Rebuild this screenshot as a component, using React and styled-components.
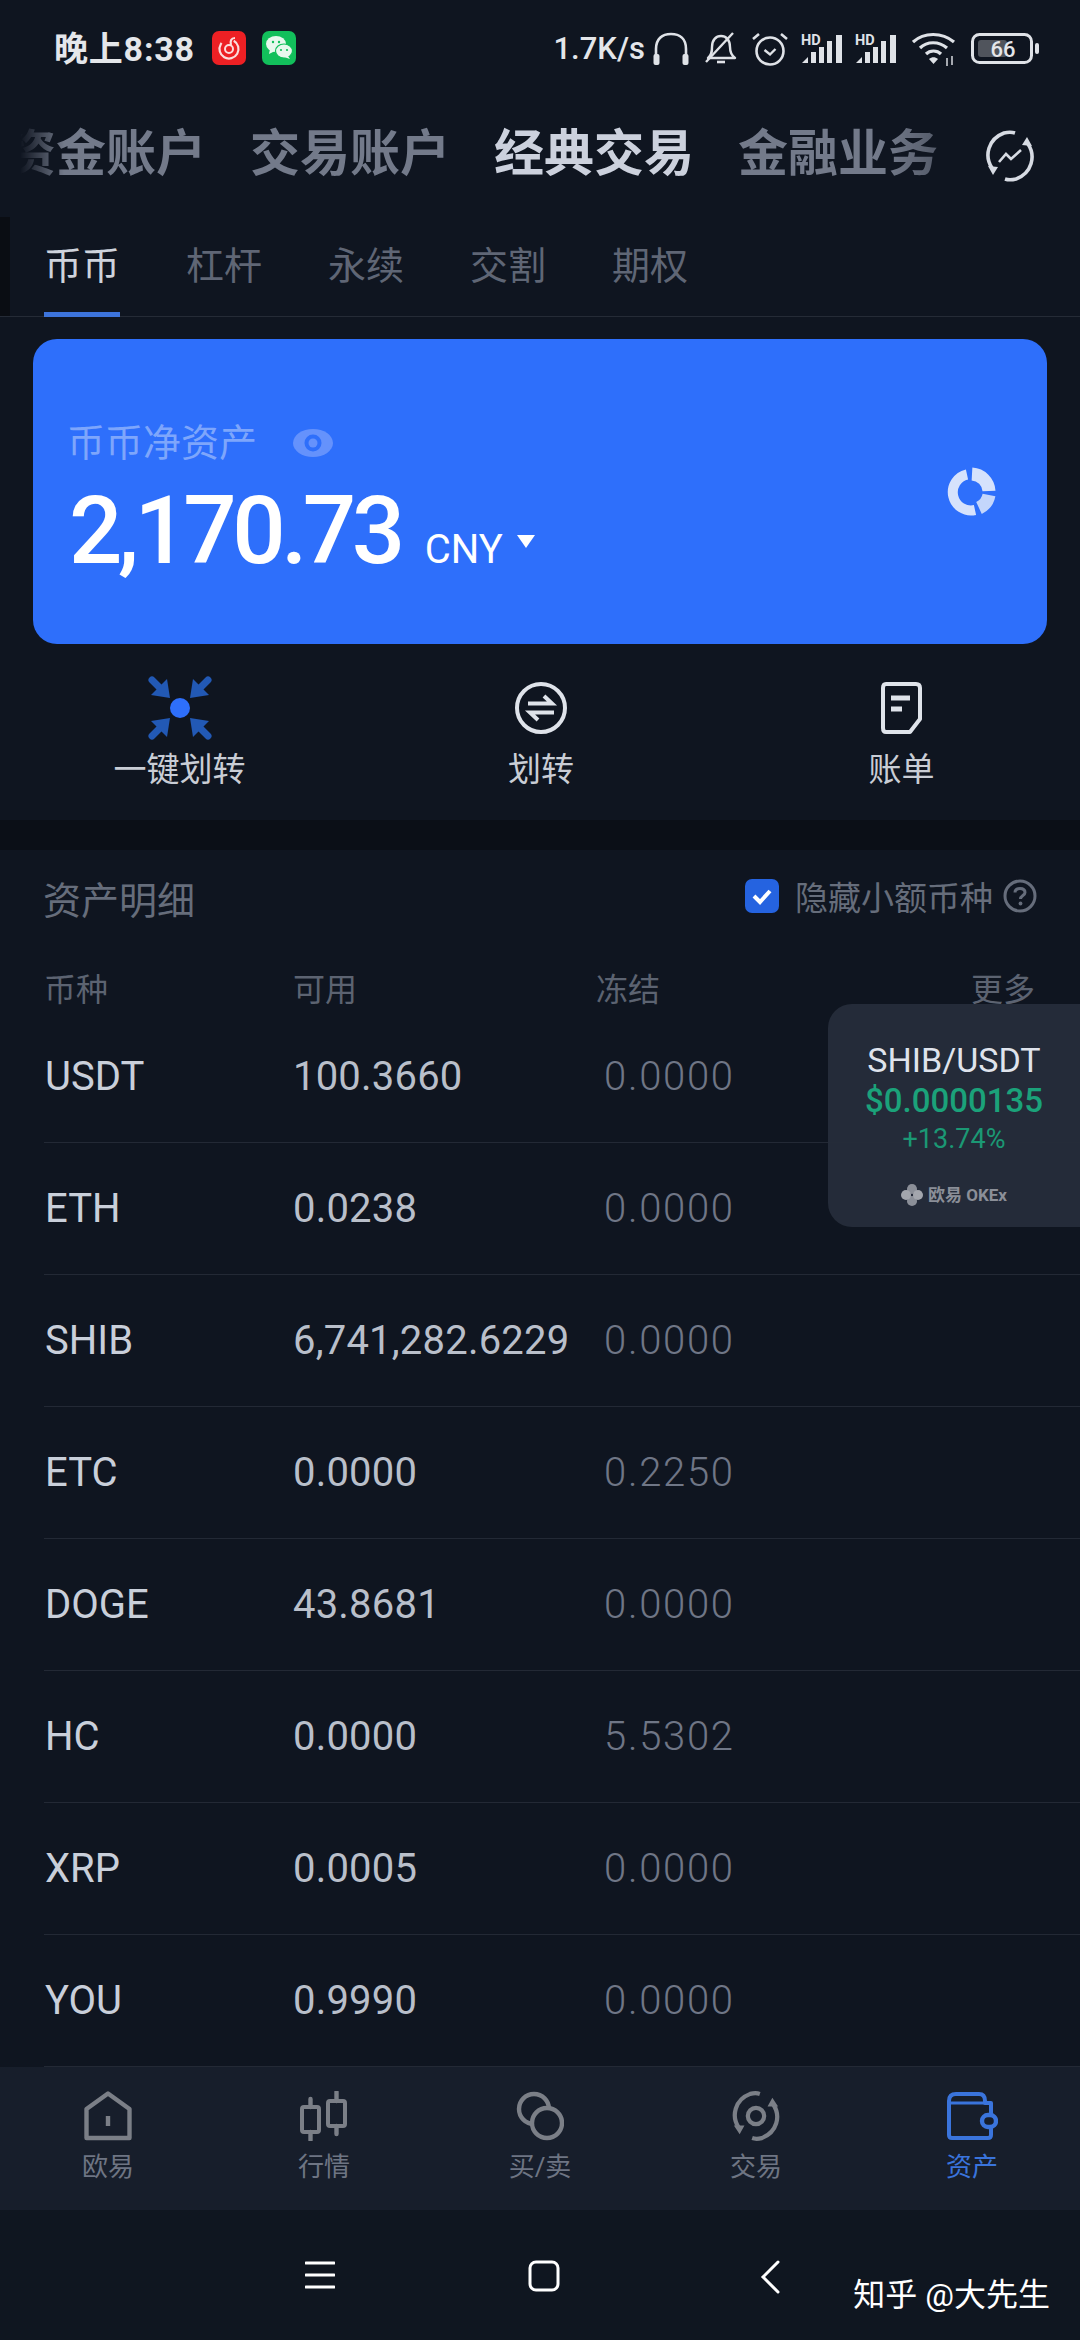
import React from "react";
import styled, { createGlobalStyle } from "styled-components";

const SANS = `Roboto, "Noto Sans CJK SC", sans-serif`;

const Global = createGlobalStyle`
	html, body {
		margin: 0;
		padding: 0;
		background: #0f1520;
	}
	* {
		box-sizing: border-box;
	}
`;

// Layout containers
const Screen = styled.div`
	width: 1080px;
	height: 2340px;
	overflow: hidden;
	position: relative;
	display: flex;
	flex-direction: column;
	background: #0f1520;
	font-family: ${SANS};
`;

const StatusBar = styled.div`
	height: 96px;
	padding: 30px 40px 0 54px;
	display: flex;
	align-items: flex-start;
	color: #e4e6ea;
`;

const Clock = styled.span`
	font-size: 34px;
	font-weight: 700;
	line-height: 38px;
	letter-spacing: 0.8px;
	width: 158px;
`;

const AppBadge = styled.svg`
	width: 34px;
	height: 36px;
	margin-right: 16px;
`;

const StatusRight = styled.div`
	margin-left: auto;
	display: flex;
	align-items: center;
	height: 38px;
`;

const Speed = styled.span`
	font-size: 31px;
	font-weight: 500;
	line-height: 38px;
	margin-right: 8px;
`;

const StatusIcon = styled.svg`
	display: block;
	margin-right: ${(p) => p.$gap || 0}px;
`;

const TopTabs = styled.div`
	height: 108px;
	display: flex;
	align-items: center;
	padding: 8px 0 0 6px;
`;

const TopTabScroll = styled.div`
	display: flex;
	gap: 44px;
	width: 950px;
	overflow: hidden;
	-webkit-mask-image: linear-gradient(to right, transparent 14px, #000 58px, #000 880px, rgba(0, 0, 0, 0.7) 930px);
	mask-image: linear-gradient(to right, transparent 14px, #000 58px, #000 880px, rgba(0, 0, 0, 0.7) 930px);
`;

const TopTab = styled.span`
	font-size: 50px;
	line-height: 70px;
	font-weight: 700;
	flex: none;
	color: ${(p) => (p.$active ? "#ccd1dd" : "#737a8a")};
`;

const RefreshIcon = styled.svg`
	flex: none;
	margin: 4px 0 0 29px;
`;

const SubTabs = styled.div`
	height: 113px;
	padding: 13px 0 0 44px;
	display: flex;
	gap: 66px;
	border-bottom: 1px solid #252b36;
	position: relative;
	&:before {
		content: "";
		position: absolute;
		left: 0;
		top: 13px;
		width: 10px;
		height: 99px;
		background: #0a0d13;
	}
`;

const SubTab = styled.span`
	font-size: 38px;
	line-height: 98px;
	height: 100px;
	color: ${(p) => (p.$active ? "#ced3dc" : "#5f6675")};
	border-bottom: 5px solid ${(p) => (p.$active ? "#3d74dc" : "transparent")};
`;

const BalanceCard = styled.div`
	margin: 22px 33px 0;
	height: 305px;
	border-radius: 24px;
	background: #2e6ffb;
	padding: 0 51px 0 34px;
	display: flex;
	justify-content: space-between;
	align-items: center;
`;

const BalanceText = styled.div`
	display: flex;
	flex-direction: column;
	margin-top: 20px;
`;

const BalanceLabel = styled.div`
	display: flex;
	align-items: center;
	gap: 36px;
	font-size: 38px;
	line-height: 50px;
	color: #7ea6fb;
`;

const BalanceValue = styled.div`
	display: flex;
	align-items: baseline;
	color: #fff;
	margin-top: 9px;
	padding-left: 2px;
`;

const Amount = styled.span`
	font-size: 94px;
	line-height: 108px;
	font-weight: 500;
	letter-spacing: -4.5px;
`;

const Currency = styled.span`
	font-size: 40px;
	margin-left: 24px;
	margin-right: 14px;
	font-weight: 400;
`;

const Caret = styled.i`
	display: block;
	width: 0;
	height: 0;
	border-style: solid;
	border-width: 13px 9px 0 9px;
	border-color: #fff transparent transparent;
	align-self: center;
	margin-top: 20px;
`;

const Actions = styled.div`
	height: 176px;
	display: grid;
	grid-template-columns: 359px 364px 357px;
	padding-top: 32px;
`;

const Action = styled.div`
	display: flex;
	flex-direction: column;
	align-items: center;
	color: #c9cdd5;
	font-size: 33px;
	line-height: 44px;
	gap: 8px;
`;

const ActionIcon = styled.svg`
	display: block;
	margin: ${(p) => p.$inset || 0}px 0;
`;

const Band = styled.div`
	height: 30px;
	background: #0b0f17;
`;

const Section = styled.div`
	position: relative;
	height: 1217px;
	background: #0f1520;
`;

const SectionHead = styled.div`
	height: 100px;
	padding: 0 43px 6px 43px;
	display: flex;
	align-items: center;
	font-size: 38px;
	color: #666d7b;
`;

const HideOption = styled.div`
	margin-left: auto;
	display: flex;
	align-items: center;
	font-size: 33px;
	color: #666d7b;
	margin-bottom: 3px;
`;

const CheckMark = styled.svg`
	margin-right: 16px;
`;

const HelpMark = styled.svg`
	margin-left: 10px;
`;

const TableHead = styled.div`
	display: grid;
	grid-template-columns: 249px 303px 1fr auto;
	height: 61px;
	padding: 13px 45px 0 44px;
	align-items: center;
	font-size: 32px;
	color: #5c6371;
`;

const Row = styled.div`
	display: grid;
	grid-template-columns: 248px 311px 1fr;
	align-items: center;
	height: 132px;
	margin-left: 44px;
	padding-left: 1px;
	border-bottom: 1px solid #232935;
`;

const Coin = styled.span`
	font-size: 40px;
	font-weight: 400;
	color: #c9cfda;
`;

const Available = styled.span`
	font-size: 40px;
	font-weight: 400;
	letter-spacing: 0.2px;
	color: #b9bfca;
`;

const Frozen = styled.span`
	font-size: 40px;
	font-weight: 300;
	letter-spacing: 1.7px;
	color: #6f7686;
`;

const TickerCard = styled.div`
	position: absolute;
	right: 0;
	top: 154px;
	width: 252px;
	height: 223px;
	border-radius: 24px 0 0 24px;
	background: rgba(37, 44, 58, 0.97);
	display: flex;
	flex-direction: column;
	align-items: center;
	padding-top: 36px;
`;

const TickerPair = styled.div`
	font-size: 34px;
	line-height: 40px;
	color: #dfe3ec;
`;

const TickerPrice = styled.div`
	font-size: 33px;
	line-height: 41px;
	font-weight: 500;
	color: #1ba27a;
`;

const TickerChange = styled.div`
	font-size: 27px;
	line-height: 37px;
	color: #1b9874;
`;

const TickerBrand = styled.div`
	display: flex;
	align-items: center;
	gap: 5px;
	margin-top: 23px;
	font-size: 17px;
	line-height: 28px;
	font-weight: 700;
	color: #8b8f98;
`;

const BrandMark = styled.svg`
	display: block;
`;

const BottomNav = styled.div`
	height: 143px;
	background: #171e2b;
	display: grid;
	grid-template-columns: repeat(5, 216px);
`;

const NavItem = styled.div`
	display: flex;
	flex-direction: column;
	align-items: center;
	padding-top: 24px;
	font-size: 26px;
	line-height: 36px;
	gap: 8px;
	color: ${(p) => (p.$active ? "#3a74dc" : "#6e7583")};
`;

const SystemBar = styled.div`
	height: 130px;
	background: #0f1620;
	display: flex;
	align-items: flex-start;
	padding: 50px 0 0 305px;
	gap: 193px;
`;

const BackIcon = styled.svg`
	margin-left: 7px;
`;

const Watermark = styled.div`
	position: absolute;
	right: 30px;
	bottom: 25px;
	font-size: 32px;
	line-height: 40px;
	color: #fff;
`;

// Drawn icons
const NeteaseIcon = () => (
	<AppBadge viewBox="0 0 34 36">
		<rect x="0" y="1" width="34" height="34" rx="7" fill="#ed2024" />
		<circle cx="17" cy="19" r="9.5" fill="none" stroke="#fbdcdc" strokeWidth="2.2" strokeDasharray="46 14" transform="rotate(-60 17 19)" />
		<circle cx="17" cy="19" r="4" fill="none" stroke="#fbdcdc" strokeWidth="2" />
		<path d="M19 15 C18 11 19 8 23 8" fill="none" stroke="#fbdcdc" strokeWidth="2.2" />
	</AppBadge>
);

const WechatIcon = () => (
	<AppBadge viewBox="0 0 34 36">
		<rect x="0" y="1" width="34" height="34" rx="7" fill="#12bf5b" />
		<ellipse cx="14" cy="14" rx="10" ry="8" fill="#e8f8ee" />
		<path d="M8 19 L7 24 L13 21 Z" fill="#e8f8ee" />
		<ellipse cx="22" cy="21" rx="8.5" ry="7" fill="#e8f8ee" stroke="#12bf5b" strokeWidth="1.2" />
		<path d="M26 26 L28 29 L22 27 Z" fill="#e8f8ee" />
		<circle cx="11" cy="12" r="1.2" fill="#12bf5b" />
		<circle cx="17" cy="12" r="1.2" fill="#12bf5b" />
		<circle cx="19" cy="20" r="1.1" fill="#12bf5b" />
		<circle cx="25" cy="20" r="1.1" fill="#12bf5b" />
	</AppBadge>
);

const Headphones = () => (
	<StatusIcon width="36" height="34" viewBox="0 0 36 34" $gap={16}>
		<path d="M3 26 V17 C3 7 9 2 18 2 C27 2 33 7 33 17 V26" fill="none" stroke="#dfe2e7" strokeWidth="2.6" />
		<rect x="0.5" y="22" width="6" height="11" rx="2" fill="#dfe2e7" />
		<rect x="29.5" y="22" width="6" height="11" rx="2" fill="#dfe2e7" />
	</StatusIcon>
);

const MutedBell = () => (
	<StatusIcon width="32" height="34" viewBox="0 0 32 34" $gap={15}>
		<path d="M3 26 C7 23 7 19 7 15 C7 8 11 4 16 4 C21 4 25 8 25 15 C25 19 26 23 30 26 Z" fill="none" stroke="#dfe2e7" strokeWidth="2.4" strokeLinejoin="round" />
		<path d="M12 30 H20" stroke="#dfe2e7" strokeWidth="2.6" />
		<path d="M1 30 L28 1" stroke="#dfe2e7" strokeWidth="2.4" />
	</StatusIcon>
);

const AlarmClock = () => (
	<StatusIcon width="36" height="36" viewBox="0 0 36 36" $gap={13}>
		<circle cx="18" cy="20" r="13.5" fill="none" stroke="#dfe2e7" strokeWidth="2.6" />
		<path d="M12.5 19 L18 23.5 L23.5 18" fill="none" stroke="#dfe2e7" strokeWidth="2.4" />
		<path d="M1 8 L7 3 M35 8 L29 3" stroke="#dfe2e7" strokeWidth="2.6" />
	</StatusIcon>
);

const Signal = ({ gap }) => (
	<StatusIcon width="42" height="34" viewBox="0 0 42 34" $gap={gap}>
		<text x="0" y="13" fontFamily="Roboto, sans-serif" fontSize="14.5" fontWeight="700" fill="#dfe2e7">HD</text>
		<path d="M1 31 L7 25 V31 Z" fill="#dfe2e7" />
		<rect x="10" y="20" width="5" height="11" fill="#dfe2e7" />
		<rect x="18" y="15" width="5" height="16" fill="#dfe2e7" />
		<rect x="26" y="9" width="5" height="22" fill="#dfe2e7" />
		<rect x="35" y="3" width="6" height="28" fill="#dfe2e7" />
	</StatusIcon>
);

const Wifi = () => (
	<StatusIcon width="44" height="36" viewBox="0 0 44 36" $gap={15}>
		<path d="M1 11 C12 1 30 1 42 11" fill="none" stroke="#dfe2e7" strokeWidth="3.2" />
		<path d="M8 17 C15 10 27 10 35 17" fill="none" stroke="#dfe2e7" strokeWidth="3.2" />
		<path d="M14 23 C18 19 25 19 29 23" fill="none" stroke="#dfe2e7" strokeWidth="3.2" />
		<path d="M21.5 33 L17 28 C20 25.5 23 25.5 26 28 Z" fill="#dfe2e7" />
		<path d="M35 27 V35 M40 25 V34" stroke="#b6b9bf" strokeWidth="1.8" />
	</StatusIcon>
);

const Battery = () => (
	<StatusIcon width="69" height="32" viewBox="0 0 69 32">
		<rect x="1.5" y="1.5" width="59" height="28" rx="7" fill="none" stroke="#dfe2e7" strokeWidth="3" />
		<rect x="7" y="7" width="29" height="17" rx="3" fill="#50545c" />
		<rect x="64" y="10" width="4" height="11" rx="2" fill="#dfe2e7" />
		<text x="32" y="24" textAnchor="middle" fontFamily="Roboto, sans-serif" fontSize="22" fontWeight="500" fill="#e4e6ea">66</text>
	</StatusIcon>
);

const ChartRefresh = () => (
	<RefreshIcon width="50" height="52" viewBox="0 0 50 52">
		<path d="M7 38 C-1 26 3 9 19 3 C23 2 27 2 30 3" fill="none" stroke="#d7dbe3" strokeWidth="3.6" />
		<path d="M43 14 C51 26 47 43 31 49 C27 50 23 50 20 49" fill="none" stroke="#d7dbe3" strokeWidth="3.6" />
		<path d="M3 36 L13 37 L8 45 Z M47 16 L37 15 L42 7 Z" fill="#d7dbe3" />
		<path d="M14 32 L21 24 L26 29 L36 20" fill="none" stroke="#d7dbe3" strokeWidth="2.6" />
	</RefreshIcon>
);

const EyeIcon = () => (
	<svg width="40" height="30" viewBox="0 0 40 30">
		<ellipse cx="20" cy="15" rx="20" ry="14" fill="#6592fc" />
		<circle cx="20" cy="15" r="8.5" fill="#2e6ffb" />
		<circle cx="20" cy="15" r="4.5" fill="#6592fc" />
	</svg>
);

const PieIcon = () => (
	<svg width="50" height="50" viewBox="0 0 50 50">
		<path d="M26 7 A18 18 0 0 1 43 24" fill="none" stroke="#d6e2fc" strokeWidth="13" />
		<path d="M43 28 A18 18 0 0 1 33 41" fill="none" stroke="#c4d6fb" strokeWidth="13" />
		<path d="M29 43 A18 18 0 1 1 21 7.5" fill="none" stroke="#d6e2fc" strokeWidth="10" />
	</svg>
);

const CollectIcon = () => (
	<ActionIcon width="64" height="64" viewBox="0 0 64 64">
		<circle cx="32" cy="32" r="10" fill="#2e6ffb" />
		{[0, 90, 180, 270].map((r) => (
			<g key={r} transform={`rotate(${r} 32 32)`}>
				<path d="M4 4 L15 15" stroke="#2259b5" strokeWidth="7" strokeLinecap="round" />
				<path d="M22 22 L3 19 L19 3 Z" fill="#2259b5" />
			</g>
		))}
	</ActionIcon>
);

const TransferIcon = () => (
	<ActionIcon width="54" height="54" viewBox="0 0 54 54" $inset={5}>
		<circle cx="27" cy="27" r="24" fill="none" stroke="#dfe3ea" strokeWidth="4" />
		<path d="M14 22.5 H38 L30 15" fill="none" stroke="#dfe3ea" strokeWidth="4" />
		<path d="M40 31.5 H16 L24 39" fill="none" stroke="#dfe3ea" strokeWidth="4" />
	</ActionIcon>
);

const BillIcon = () => (
	<ActionIcon width="44" height="54" viewBox="0 0 44 54" $inset={5}>
		<path d="M6 3 H36 Q40 3 40 7 V38 L30 51 H6 Q3 51 3 47 V7 Q3 3 6 3 Z" fill="none" stroke="#dfe3ea" strokeWidth="4" strokeLinejoin="round" />
		<path d="M11 17 H30 M11 28 H22" stroke="#dfe3ea" strokeWidth="5" />
	</ActionIcon>
);

const CheckBox = () => (
	<CheckMark width="34" height="34" viewBox="0 0 34 34">
		<rect width="34" height="34" rx="7" fill="#2563e0" />
		<path d="M9 17 L15 23 L25 12" fill="none" stroke="#fff" strokeWidth="4" />
	</CheckMark>
);

const HelpIcon = () => (
	<HelpMark width="34" height="34" viewBox="0 0 34 34">
		<circle cx="17" cy="17" r="15" fill="none" stroke="#666d7b" strokeWidth="3" />
		<path d="M12 13.5 C12 10.5 14.5 9.5 17 9.5 C20 9.5 22 11 22 13.5 C22 16.5 17.5 16.5 17.5 20" fill="none" stroke="#666d7b" strokeWidth="3" />
		<circle cx="17.5" cy="24.5" r="1.9" fill="#666d7b" />
	</HelpMark>
);

const OkexMark = () => (
	<BrandMark width="22" height="22" viewBox="0 0 24 24">
		<circle cx="12" cy="5.5" r="5.5" fill="#8b8f98" />
		<circle cx="12" cy="18.5" r="5.5" fill="#8b8f98" />
		<circle cx="5.5" cy="12" r="5.5" fill="#a3a6ad" />
		<circle cx="18.5" cy="12" r="5.5" fill="#a3a6ad" />
	</BrandMark>
);

const NAV_GREY = "#7b7f87";

const HomeNav = () => (
	<svg width="48" height="50" viewBox="0 0 48 50">
		<path d="M2.5 47 V18 L24 2.5 L45.5 18 V47 Z" fill="none" stroke={NAV_GREY} strokeWidth="4.4" strokeLinejoin="round" />
		<path d="M24 25 V35" stroke={NAV_GREY} strokeWidth="4.4" />
	</svg>
);

const MarketNav = () => (
	<svg width="48" height="50" viewBox="0 0 48 50">
		<rect x="2" y="16" width="17" height="25" rx="2" fill="none" stroke={NAV_GREY} strokeWidth="4" />
		<rect x="28" y="10" width="17" height="25" rx="2" fill="none" stroke={NAV_GREY} strokeWidth="4" />
		<path d="M10.5 8 V16 M10.5 41 V49 M36.5 1 V10 M36.5 35 V43" stroke={NAV_GREY} strokeWidth="4.4" strokeLinecap="round" />
	</svg>
);

const TradeNav = () => (
	<svg width="48" height="50" viewBox="0 0 48 50">
		<circle cx="18" cy="18" r="15" fill="none" stroke={NAV_GREY} strokeWidth="4.4" />
		<circle cx="31" cy="32" r="15" fill="#171e2b" stroke={NAV_GREY} strokeWidth="4.4" />
	</svg>
);

const SwapNav = () => (
	<svg width="50" height="50" viewBox="0 0 50 52">
		<path d="M7 38 C-1 26 3 9 19 3 C23 2 26 2 29 3" fill="none" stroke={NAV_GREY} strokeWidth="4.4" />
		<path d="M43 14 C51 26 47 43 31 49 C27 50 24 50 21 49" fill="none" stroke={NAV_GREY} strokeWidth="4.4" />
		<path d="M2 36 L13 36 L8 45 Z M48 16 L37 16 L42 7 Z" fill={NAV_GREY} />
		<circle cx="25" cy="26" r="8.5" fill="none" stroke={NAV_GREY} strokeWidth="4.4" />
	</svg>
);

const WalletNav = () => (
	<svg width="52" height="50" viewBox="0 0 52 50">
		<path d="M45 23 V12 H39 V10 Q39 3 33 3 H10 Q3 3 3 10 V44 Q3 47 6 47 H42 Q45 47 45 44 V37" fill="none" stroke="#3a74dc" strokeWidth="4" strokeLinejoin="round" />
		<path d="M3 12 H39" stroke="#3a74dc" strokeWidth="3" />
		<rect x="36" y="24" width="14" height="12" rx="6" fill="none" stroke="#3a74dc" strokeWidth="4.4" />
	</svg>
);

const MenuGlyph = () => (
	<svg width="30" height="30" viewBox="0 0 30 30">
		<path d="M1 3 H29 M1 15 H29 M1 27 H29" stroke="#fff" strokeWidth="3" strokeLinecap="round" />
	</svg>
);

const HomeGlyph = () => (
	<svg width="32" height="32" viewBox="0 0 32 32">
		<rect x="2" y="2" width="28" height="28" rx="6" fill="none" stroke="#fff" strokeWidth="3" />
	</svg>
);

const BackGlyph = () => (
	<BackIcon width="20" height="34" viewBox="0 0 20 34">
		<path d="M18 2 L3 17 L18 32" fill="none" stroke="#fff" strokeWidth="3" strokeLinecap="round" />
	</BackIcon>
);

const ROWS = [
	["USDT", "100.3660", "0.0000"],
	["ETH", "0.0238", "0.0000"],
	["SHIB", "6,741,282.6229", "0.0000"],
	["ETC", "0.0000", "0.2250"],
	["DOGE", "43.8681", "0.0000"],
	["HC", "0.0000", "5.5302"],
	["XRP", "0.0005", "0.0000"],
	["YOU", "0.9990", "0.0000"],
];

const NAV = [
	["欧易", HomeNav],
	["行情", MarketNav],
	["买/卖", TradeNav],
	["交易", SwapNav],
	["资产", WalletNav],
];

const App = () => (
	<Screen>
		<Global />
		<StatusBar>
			<Clock>晚上8:38</Clock>
			<NeteaseIcon />
			<WechatIcon />
			<StatusRight>
				<Speed>1.7K/s</Speed>
				<Headphones />
				<MutedBell />
				<AlarmClock />
				<Signal gap={12} />
				<Signal gap={15} />
				<Wifi />
				<Battery />
			</StatusRight>
		</StatusBar>
		<TopTabs>
			<TopTabScroll>
				<TopTab>资金账户</TopTab>
				<TopTab>交易账户</TopTab>
				<TopTab $active>经典交易</TopTab>
				<TopTab>金融业务</TopTab>
			</TopTabScroll>
			<ChartRefresh />
		</TopTabs>
		<SubTabs>
			<SubTab $active>币币</SubTab>
			<SubTab>杠杆</SubTab>
			<SubTab>永续</SubTab>
			<SubTab>交割</SubTab>
			<SubTab>期权</SubTab>
		</SubTabs>
		<BalanceCard>
			<BalanceText>
				<BalanceLabel>
					币币净资产
					<EyeIcon />
				</BalanceLabel>
				<BalanceValue>
					<Amount>2,170.73</Amount>
					<Currency>CNY</Currency>
					<Caret />
				</BalanceValue>
			</BalanceText>
			<PieIcon />
		</BalanceCard>
		<Actions>
			<Action>
				<CollectIcon />
				一键划转
			</Action>
			<Action>
				<TransferIcon />
				划转
			</Action>
			<Action>
				<BillIcon />
				账单
			</Action>
		</Actions>
		<Band />
		<Section>
			<SectionHead>
				资产明细
				<HideOption>
					<CheckBox />
					隐藏小额币种
					<HelpIcon />
				</HideOption>
			</SectionHead>
			<TableHead>
				<span>币种</span>
				<span>可用</span>
				<span>冻结</span>
				<span>更多</span>
			</TableHead>
			{ROWS.map(([coin, available, frozen]) => (
				<Row key={coin}>
					<Coin>{coin}</Coin>
					<Available>{available}</Available>
					<Frozen>{frozen}</Frozen>
				</Row>
			))}
			<TickerCard>
				<TickerPair>SHIB/USDT</TickerPair>
				<TickerPrice>$0.0000135</TickerPrice>
				<TickerChange>+13.74%</TickerChange>
				<TickerBrand>
					<OkexMark />
					欧易 OKEx
				</TickerBrand>
			</TickerCard>
		</Section>
		<BottomNav>
			{NAV.map(([label, Icon]) => (
				<NavItem key={label} $active={label === "资产"}>
					<Icon />
					{label}
				</NavItem>
			))}
		</BottomNav>
		<SystemBar>
			<MenuGlyph />
			<HomeGlyph />
			<BackGlyph />
		</SystemBar>
		<Watermark>知乎 @大先生</Watermark>
	</Screen>
);

export default App;
